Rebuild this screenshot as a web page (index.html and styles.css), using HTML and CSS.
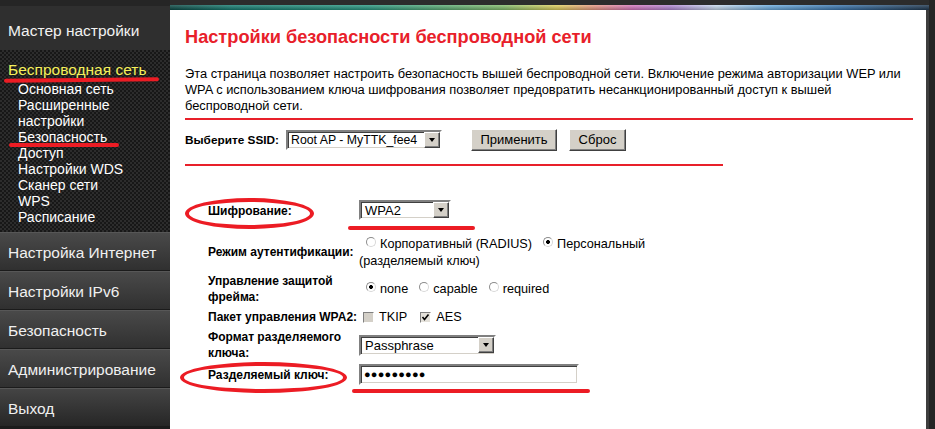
FILE: index.html
```html
<!DOCTYPE html>
<html lang="ru">
<head>
<meta charset="utf-8">
<title>Настройки безопасности беспроводной сети</title>
<link rel="stylesheet" href="styles.css">
</head>
<body>
<div class="page">
  <aside class="sidebar">
    <div class="wizard">Мастер настройки</div>
    <nav class="wireless">
      <div class="wireless-title">Беспроводная сеть</div>
      <ul class="submenu">
        <li>Основная сеть</li>
        <li>Расширенные<br>настройки</li>
        <li>Безопасность</li>
        <li>Доступ</li>
        <li>Настройки WDS</li>
        <li>Сканер сети</li>
        <li>WPS</li>
        <li>Расписание</li>
      </ul>
    </nav>
    <ul class="menu">
      <li>Настройка Интернет</li>
      <li>Настройки IPv6</li>
      <li>Безопасность</li>
      <li>Администрирование</li>
      <li class="last">Выход</li>
    </ul>
  </aside>

  <main class="main">
    <div class="topbar"></div>
    <div class="rainbow"></div>
    <div class="content">
      <h1 class="title">Настройки безопасности беспроводной сети</h1>
      <p class="intro">Эта страница позволяет настроить безопасность вышей беспроводной сети. Включение режима авторизации WEP или<br>WPA с использованием ключа шифрования позволяет предовратить несанкционированный доступ к вышей<br>беспроводной сети.</p>
      <hr class="rule">
      <div class="ssid-row">
        <span class="ssid-label">Выберите SSID:</span>
        <div class="select ssid-select"><span class="select-text">Root AP - MyTTK_fee4</span><span class="select-btn"><span class="tri"></span></span></div>
        <button class="btn btn-apply">Применить</button>
        <button class="btn btn-reset">Сброс</button>
      </div>
      <hr class="rule short">

      <div class="form">
        <div class="row row-enc">
          <div class="lbl">Шифрование:</div>
          <div class="val"><div class="select enc-select"><span class="select-text">WPA2</span><span class="select-btn"><span class="tri"></span></span></div></div>
        </div>
        <div class="row row-auth">
          <div class="lbl">Режим аутентификации:</div>
          <div class="val text-val"><span class="radio first"></span>Корпоративный (RADIUS)<span class="radio on"></span>Персональный<br>(разделяемый ключ)</div>
        </div>
        <div class="row">
          <div class="lbl">Управление защитой<br>фрейма:</div>
          <div class="val text-val"><span class="radio on first"></span>none<span class="radio"></span>capable<span class="radio"></span>required</div>
        </div>
        <div class="row row-pack">
          <div class="lbl">Пакет управления WPA2:</div>
          <div class="val text-val"><span class="check first"></span>TKIP<span class="check on"><svg viewBox="0 0 9 9" width="9" height="9"><path d="M1.5 4 L3.5 6.5 L7.5 1.5" fill="none" stroke="#000" stroke-width="1.6"/></svg></span>AES</div>
        </div>
        <div class="row">
          <div class="lbl">Формат разделяемого<br>ключа:</div>
          <div class="val"><div class="select fmt-select"><span class="select-text">Passphrase</span><span class="select-btn"><span class="tri"></span></span></div></div>
        </div>
        <div class="row row-key">
          <div class="lbl">Разделяемый ключ:</div>
          <div class="val"><div class="input key-input">●●●●●●●●●</div></div>
        </div>
      </div>
    </div>
  </main>
</div>

<div class="mark mark-u1"></div>
<div class="mark mark-u2"></div>
<div class="mark mark-u3"></div>
<div class="mark mark-u4"></div>
<div class="ellipse ellipse-enc"></div>
<div class="ellipse ellipse-key"></div>
</body>
</html>
```

FILE: styles.css
```css
body {
  margin: 0;
  width: 935px;
  height: 429px;
  overflow: hidden;
  position: relative;
  background: #222;
  font-family: "Liberation Sans", Arial, sans-serif;
}

.page {
  display: flex;
  height: 429px;
}

/* ---------- sidebar ---------- */
.sidebar {
  width: 170px;
  flex: none;
  display: flex;
  flex-direction: column;
  background: #1c1c1c;
}

.wizard {
  height: 50px;
  box-sizing: border-box;
  border-top: 6px solid #252525;
  background: #2f2f2f;
  color: #f2f2f2;
  font-size: 15.5px;
  line-height: 20px;
  padding: 15px 0 0 8px;
}

.wireless {
  height: 182px;
  box-sizing: border-box;
  padding-top: 10px;
  background:
    linear-gradient(45deg, #2c2c2c 25%, transparent 25%, transparent 75%, #2c2c2c 75%) 0 0 / 4px 4px,
    linear-gradient(45deg, #2c2c2c 25%, transparent 25%, transparent 75%, #2c2c2c 75%) 2px 2px / 4px 4px,
    #171717;
}

.wireless-title {
  color: #f5f05a;
  font-size: 15.5px;
  line-height: 20px;
  padding-left: 8px;
}

.submenu {
  list-style: none;
  margin: 1px 0 0;
  padding: 0 0 0 18px;
  font-size: 14px;
  line-height: 16px;
  color: #fff;
}

.menu {
  list-style: none;
  margin: 0;
  padding: 0;
}

.menu li {
  height: 39px;
  box-sizing: border-box;
  display: flex;
  align-items: center;
  padding: 3px 0 0 8px;
  color: #f0f0f0;
  font-size: 15.5px;
  background: linear-gradient(#4a4a4a, #303030);
  border-bottom: 1px solid #1b1b1b;
  box-shadow: inset 0 1px 0 #575757;
}

.menu li.last {
  background: linear-gradient(#454545, #262626);
}

/* ---------- main ---------- */
.main {
  flex: 1;
  display: flex;
  flex-direction: column;
  background: #252525;
  padding-right: 6px;
}

.topbar {
  height: 5px;
  background: #2c2c2c;
}

.rainbow {
  height: 5px;
  background:
    linear-gradient(rgba(255,255,255,0.18), rgba(0,0,0,0.25)),
    linear-gradient(90deg, #0d4a46 0%, #177d72 8%, #2b9a84 26%, #86bf6e 44%, #e2d25e 51%, #ec9a86 56%, #d678c0 61%, #b48ad8 66%, #c8dcf0 72%, #6eaee0 79%, #3d78b0 88%, #203850 100%);
}

.content {
  flex: 1;
  background: #fff;
  border-right: 3px solid #3e3e3e;
  padding: 16px 0 0 15px;
}

.title {
  margin: 0;
  font-size: 18.2px;
  line-height: 22px;
  font-weight: bold;
  color: #e8202a;
}

.intro {
  margin: 18px 0 0;
  font-size: 12.85px;
  line-height: 16px;
  color: #000;
  white-space: nowrap;
}

.rule {
  border: 0;
  height: 2px;
  width: 728px;
  background: #e8202a;
  margin: 4px 0 0;
}

.rule.short {
  width: 538px;
  margin-top: 14px;
}

.ssid-row {
  display: flex;
  align-items: center;
  height: 21px;
  margin-top: 9px;
}

.ssid-label {
  width: 101px;
  font-size: 11.8px;
  font-weight: bold;
}

/* classic select */
.select {
  display: flex;
  box-sizing: border-box;
  height: 20px;
  border: 2px solid;
  border-color: #808080 #fff #fff #808080;
  background: #fff;
  box-shadow: inset 1px 1px 0 #404040, inset -1px -1px 0 #d4d0c8;
  font-size: 13px;
  align-items: center;
}

.select-text {
  flex: 1;
  padding-left: 4px;
  white-space: nowrap;
  overflow: hidden;
}

.ssid-select .select-text {
  font-size: 12.3px;
  padding-left: 3px;
}

.select-btn {
  width: 16px;
  height: 16px;
  flex: none;
  box-sizing: border-box;
  background: #d4d0c8;
  border: 1px solid;
  border-color: #fff #404040 #404040 #fff;
  box-shadow: inset -1px -1px 0 #808080;
  display: flex;
  align-items: center;
  justify-content: center;
}

.tri {
  width: 0;
  height: 0;
  border-left: 3.5px solid transparent;
  border-right: 3.5px solid transparent;
  border-top: 4px solid #000;
}

.ssid-select { width: 156px; }
.enc-select { width: 92px; }
.fmt-select { width: 137px; height: 21px; }

.btn {
  height: 22px;
  box-sizing: border-box;
  background: #d4d0c8;
  border: 1px solid;
  border-color: #fff #404040 #404040 #fff;
  box-shadow: inset -1px -1px 0 #808080;
  font-family: "Liberation Sans", Arial, sans-serif;
  font-size: 13px;
  color: #000;
  padding: 0;
}

.btn-apply { width: 86px; margin-left: 29px; }
.btn-reset { width: 57px; margin-left: 12px; }

/* ---------- form ---------- */
.form {
  display: flex;
  flex-direction: column;
  gap: 4px;
  margin-top: 34px;
  padding-left: 23px;
}

.row {
  display: grid;
  grid-template-columns: 151px auto;
  align-items: center;
}

.row-auth { margin-top: 12px; margin-bottom: -1px; }
.row-pack { height: 16px; }
.row-key { margin-top: -1px; }

.lbl {
  font-size: 12px;
  line-height: 16px;
  font-weight: bold;
  color: #000;
}

.row-enc .lbl { padding-top: 2px; }
.row-auth .lbl { padding-bottom: 2px; }

.val {
  display: flex;
}

.text-val {
  display: block;
  font-size: 12.7px;
  line-height: 16px;
  color: #000;
}

.row-auth .text-val { line-height: 17px; }

.radio {
  display: inline-block;
  width: 10px;
  height: 10px;
  box-sizing: border-box;
  border-radius: 50%;
  border: 1px solid;
  border-color: #8c8c8c #d8d8d8 #d8d8d8 #8c8c8c;
  background: #fff;
  margin: 0 4px 0 11px;
  vertical-align: 1px;
}

.radio.first { margin-left: 7px; }

.radio.on {
  background: radial-gradient(circle, #000 0 1.8px, #fff 2.2px);
}

.check {
  display: inline-flex;
  align-items: center;
  justify-content: center;
  width: 11px;
  height: 11px;
  box-sizing: border-box;
  border: 1px solid;
  border-color: #808080 #fff #fff #808080;
  background: #d4d0c8;
  margin: 0 5px 0 13px;
  vertical-align: middle;
}

.check.first { margin-left: 4px; }
.check.on { background: #e4e1da; }

.input {
  width: 220px;
  height: 21px;
  box-sizing: border-box;
  border: 2px solid;
  border-color: #808080 #fff #fff #808080;
  box-shadow: inset 1px 1px 0 #404040, inset -1px -1px 0 #d4d0c8;
  background: #fff;
  font-size: 11px;
  line-height: 17px;
  padding-left: 3px;
  letter-spacing: 0.2px;
  color: #000;
}

/* ---------- annotations ---------- */
.mark {
  position: absolute;
  height: 4px;
  border-radius: 2px;
  background: #ec1c24;
}

.mark-u1 { left: 4px; top: 78px; width: 155px; transform: rotate(-0.6deg); }
.mark-u2 { left: 9px; top: 143px; width: 110px; }
.mark-u3 { left: 348px; top: 226px; width: 127px; }
.mark-u4 { left: 352px; top: 389px; width: 238px; }

.ellipse {
  position: absolute;
  box-sizing: border-box;
  border: 4px solid #ec1c24;
  border-radius: 50%;
}

.ellipse-enc { left: 185px; top: 198px; width: 129px; height: 31px; }
.ellipse-key { left: 180px; top: 362px; width: 167px; height: 31px; }
```
